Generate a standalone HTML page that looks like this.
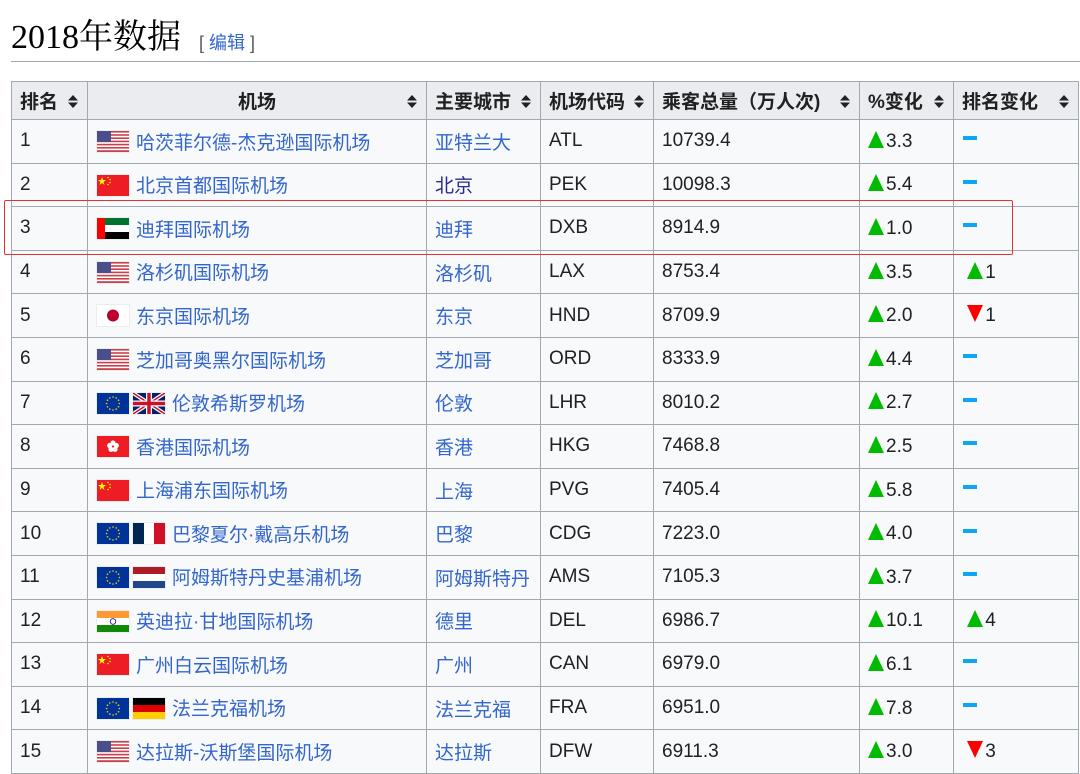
<!DOCTYPE html>
<html><head><meta charset="utf-8"><style>
*{margin:0;padding:0;box-sizing:border-box}
body{width:1080px;height:774px;background:#fff;font-family:"Liberation Sans","Noto Sans CJK SC",sans-serif;color:#202122;position:relative;overflow:hidden}
h2{position:absolute;left:11px;top:16px;font-family:"Liberation Serif","Noto Serif CJK SC",serif;font-weight:normal;font-size:34px;color:#000;line-height:44px}
.ed{position:absolute;left:199px;top:31px;font-size:18px;color:#54595d;line-height:24px}
.ed a{color:#3366cc}
.hr{position:absolute;left:11px;top:61px;width:1069px;height:1px;background:#a2a9b1}
table{position:absolute;left:11px;top:81px;border-collapse:collapse;table-layout:fixed;width:1067px;background:#f8f9fa}
td,th{border:1px solid #a2a9b1;padding:0 8px;font-size:19px;white-space:nowrap;overflow:hidden}
th{background:#eaecf0;height:38px;font-weight:bold;text-align:left;position:relative}
th .s{position:absolute;right:9px;top:13px;width:10px;height:13px}
td{height:43.6px}
a{color:#3366cc;text-decoration:none}
.f{display:inline-block;vertical-align:middle;margin-right:6px;position:relative;top:-2px;border:1px solid #eaecf0}
.f+.f{margin-left:-4px}
.up{display:inline-block;width:0;height:0;border-left:8px solid transparent;border-right:8px solid transparent;border-bottom:17px solid #00bb00;margin-right:2px;position:relative;top:1px}
.dn{display:inline-block;width:0;height:0;border-left:8px solid transparent;border-right:8px solid transparent;border-top:17px solid #f00;margin-right:2px;position:relative;top:1px}
.eq{display:inline-block;width:14px;height:4px;background:#0ea5f5;vertical-align:middle;position:relative;top:-3px;margin-left:1px}
.box{position:absolute;left:4px;top:200px;width:1009px;height:55px;border:1.5px solid #e8312f;border-radius:2px}
</style></head><body>
<h2>2018年数据</h2>
<div class="ed">[ <a>编辑</a> ]</div>
<div class="hr"></div>
<svg width="0" height="0" style="position:absolute">
<defs>
<symbol id="us" viewBox="0 0 32 21"><rect width="32" height="21" fill="#fff"/><g fill="#c8414b"><rect y="0" width="32" height="1.6"/><rect y="3.2" width="32" height="1.6"/><rect y="6.4" width="32" height="1.6"/><rect y="9.6" width="32" height="1.6"/><rect y="12.8" width="32" height="1.6"/><rect y="16" width="32" height="1.6"/><rect y="19.2" width="32" height="1.8"/></g><rect width="14" height="11" fill="#4a4e8a"/></symbol>
<symbol id="cn" viewBox="0 0 32 21"><rect width="32" height="21" fill="#ee1c25"/><polygon points="5,2 6,5 9,5 6.5,7 7.5,10 5,8 2.5,10 3.5,7 1,5 4,5" fill="#ff0"/><circle cx="11" cy="2.5" r=".8" fill="#ff0"/><circle cx="13" cy="4.5" r=".8" fill="#ff0"/><circle cx="13" cy="7.5" r=".8" fill="#ff0"/><circle cx="11" cy="9.5" r=".8" fill="#ff0"/></symbol>
<symbol id="ae" viewBox="0 0 32 21"><rect width="32" height="7" fill="#00732f"/><rect y="7" width="32" height="7" fill="#fff"/><rect y="14" width="32" height="7" fill="#000"/><rect width="8" height="21" fill="#f00"/></symbol>
<symbol id="jp" viewBox="0 0 32 21"><rect width="32" height="21" fill="#fff"/><circle cx="16" cy="10.5" r="6" fill="#bc002d"/></symbol>
<symbol id="eu" viewBox="0 0 32 21"><rect width="32" height="21" fill="#003399"/><g fill="#fc0"><circle cx="16" cy="4" r=".8"/><circle cx="19.2" cy="4.9" r=".8"/><circle cx="21.5" cy="7.2" r=".8"/><circle cx="22.4" cy="10.5" r=".8"/><circle cx="21.5" cy="13.8" r=".8"/><circle cx="19.2" cy="16.1" r=".8"/><circle cx="16" cy="17" r=".8"/><circle cx="12.8" cy="16.1" r=".8"/><circle cx="10.5" cy="13.8" r=".8"/><circle cx="9.6" cy="10.5" r=".8"/><circle cx="10.5" cy="7.2" r=".8"/><circle cx="12.8" cy="4.9" r=".8"/></g></symbol>
<symbol id="gb" viewBox="0 0 32 21"><rect width="32" height="21" fill="#012169"/><path d="M0 0L32 21M32 0L0 21" stroke="#fff" stroke-width="4"/><path d="M0 0L32 21M32 0L0 21" stroke="#c8102e" stroke-width="1.5"/><path d="M16 0V21M0 10.5H32" stroke="#fff" stroke-width="6"/><path d="M16 0V21M0 10.5H32" stroke="#c8102e" stroke-width="3.5"/></symbol>
<symbol id="hk" viewBox="0 0 32 21"><rect width="32" height="21" fill="#ee1c25"/><g fill="#fff"><circle cx="16" cy="7" r="2.6"/><circle cx="19.3" cy="9.5" r="2.6"/><circle cx="18" cy="13.3" r="2.6"/><circle cx="14" cy="13.3" r="2.6"/><circle cx="12.7" cy="9.5" r="2.6"/></g><circle cx="16" cy="10.5" r="1" fill="#ee1c25"/></symbol>
<symbol id="fr" viewBox="0 0 32 21"><rect width="11" height="21" fill="#002654"/><rect x="11" width="10" height="21" fill="#fff"/><rect x="21" width="11" height="21" fill="#ce1126"/></symbol>
<symbol id="nl" viewBox="0 0 32 21"><rect width="32" height="7" fill="#ae1c28"/><rect y="7" width="32" height="7" fill="#fff"/><rect y="14" width="32" height="7" fill="#21468b"/></symbol>
<symbol id="in" viewBox="0 0 32 21"><rect width="32" height="7" fill="#f93"/><rect y="7" width="32" height="7" fill="#fff"/><rect y="14" width="32" height="7" fill="#128807"/><circle cx="16" cy="10.5" r="2.8" fill="none" stroke="#008" stroke-width=".8"/></symbol>
<symbol id="de" viewBox="0 0 32 21"><rect width="32" height="7" fill="#000"/><rect y="7" width="32" height="7" fill="#d00"/><rect y="14" width="32" height="7" fill="#ffce00"/></symbol>
<symbol id="sort" viewBox="0 0 10 13"><polygon points="5,0 10,5.5 0,5.5" fill="#202122"/><polygon points="5,13 10,7.5 0,7.5" fill="#202122"/></symbol>
</defs></svg>
<table>
<colgroup><col style="width:76px"><col style="width:339px"><col style="width:114px"><col style="width:113px"><col style="width:206px"><col style="width:94px"><col style="width:125px"></colgroup>
<tr><th>排名<svg class="s"><use href="#sort"/></svg></th><th style="text-align:center">机场<svg class="s"><use href="#sort"/></svg></th><th>主要城市<svg class="s"><use href="#sort"/></svg></th><th>机场代码<svg class="s"><use href="#sort"/></svg></th><th>乘客总量（万人次)<svg class="s"><use href="#sort"/></svg></th><th>%变化<svg class="s"><use href="#sort"/></svg></th><th>排名变化<svg class="s"><use href="#sort"/></svg></th></tr>
<tr><td>1</td><td><svg class="f" width="34" height="23"><use href="#us"/></svg><a>哈茨菲尔德-杰克逊国际机场</a></td><td><a>亚特兰大</a></td><td>ATL</td><td>10739.4</td><td><span class="up"></span>3.3</td><td><span class="eq"></span></td></tr>
<tr><td>2</td><td><svg class="f" width="34" height="23"><use href="#cn"/></svg><a>北京首都国际机场</a></td><td><a style="color:#2a2a8d">北京</a></td><td>PEK</td><td>10098.3</td><td><span class="up"></span>5.4</td><td><span class="eq"></span></td></tr>
<tr><td>3</td><td><svg class="f" width="34" height="23"><use href="#ae"/></svg><a>迪拜国际机场</a></td><td><a>迪拜</a></td><td>DXB</td><td>8914.9</td><td><span class="up"></span>1.0</td><td><span class="eq"></span></td></tr>
<tr><td>4</td><td><svg class="f" width="34" height="23"><use href="#us"/></svg><a>洛杉矶国际机场</a></td><td><a>洛杉矶</a></td><td>LAX</td><td>8753.4</td><td><span class="up"></span>3.5</td><td>&nbsp;<span class="up"></span>1</td></tr>
<tr><td>5</td><td><svg class="f" width="34" height="23"><use href="#jp"/></svg><a>东京国际机场</a></td><td><a>东京</a></td><td>HND</td><td>8709.9</td><td><span class="up"></span>2.0</td><td>&nbsp;<span class="dn"></span>1</td></tr>
<tr><td>6</td><td><svg class="f" width="34" height="23"><use href="#us"/></svg><a>芝加哥奥黑尔国际机场</a></td><td><a>芝加哥</a></td><td>ORD</td><td>8333.9</td><td><span class="up"></span>4.4</td><td><span class="eq"></span></td></tr>
<tr><td>7</td><td><svg class="f" width="34" height="23"><use href="#eu"/></svg><svg class="f" width="34" height="23"><use href="#gb"/></svg><a>伦敦希斯罗机场</a></td><td><a>伦敦</a></td><td>LHR</td><td>8010.2</td><td><span class="up"></span>2.7</td><td><span class="eq"></span></td></tr>
<tr><td>8</td><td><svg class="f" width="34" height="23"><use href="#hk"/></svg><a>香港国际机场</a></td><td><a>香港</a></td><td>HKG</td><td>7468.8</td><td><span class="up"></span>2.5</td><td><span class="eq"></span></td></tr>
<tr><td>9</td><td><svg class="f" width="34" height="23"><use href="#cn"/></svg><a>上海浦东国际机场</a></td><td><a>上海</a></td><td>PVG</td><td>7405.4</td><td><span class="up"></span>5.8</td><td><span class="eq"></span></td></tr>
<tr><td>10</td><td><svg class="f" width="34" height="23"><use href="#eu"/></svg><svg class="f" width="34" height="23"><use href="#fr"/></svg><a>巴黎夏尔·戴高乐机场</a></td><td><a>巴黎</a></td><td>CDG</td><td>7223.0</td><td><span class="up"></span>4.0</td><td><span class="eq"></span></td></tr>
<tr><td>11</td><td><svg class="f" width="34" height="23"><use href="#eu"/></svg><svg class="f" width="34" height="23"><use href="#nl"/></svg><a>阿姆斯特丹史基浦机场</a></td><td><a>阿姆斯特丹</a></td><td>AMS</td><td>7105.3</td><td><span class="up"></span>3.7</td><td><span class="eq"></span></td></tr>
<tr><td>12</td><td><svg class="f" width="34" height="23"><use href="#in"/></svg><a>英迪拉·甘地国际机场</a></td><td><a>德里</a></td><td>DEL</td><td>6986.7</td><td><span class="up"></span>10.1</td><td>&nbsp;<span class="up"></span>4</td></tr>
<tr><td>13</td><td><svg class="f" width="34" height="23"><use href="#cn"/></svg><a>广州白云国际机场</a></td><td><a>广州</a></td><td>CAN</td><td>6979.0</td><td><span class="up"></span>6.1</td><td><span class="eq"></span></td></tr>
<tr><td>14</td><td><svg class="f" width="34" height="23"><use href="#eu"/></svg><svg class="f" width="34" height="23"><use href="#de"/></svg><a>法兰克福机场</a></td><td><a>法兰克福</a></td><td>FRA</td><td>6951.0</td><td><span class="up"></span>7.8</td><td><span class="eq"></span></td></tr>
<tr><td>15</td><td><svg class="f" width="34" height="23"><use href="#us"/></svg><a>达拉斯-沃斯堡国际机场</a></td><td><a>达拉斯</a></td><td>DFW</td><td>6911.3</td><td><span class="up"></span>3.0</td><td>&nbsp;<span class="dn"></span>3</td></tr>
</table>
<div class="box"></div>
</body></html>
